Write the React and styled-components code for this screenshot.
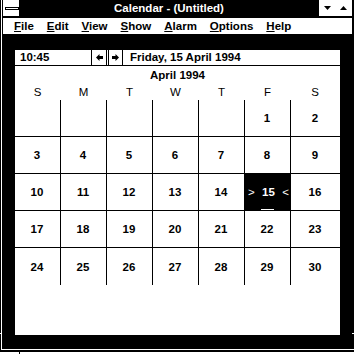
import React from "react";
import styled, { createGlobalStyle } from "styled-components";

const GlobalStyle = createGlobalStyle`
  * { box-sizing: border-box; }
  html, body { margin: 0; padding: 0; background: #fff; }
  body {
    font-family: "Liberation Sans", Arial, sans-serif;
    -webkit-font-smoothing: none;
  }
`;

const Desktop = styled.div`
  position: relative;
  width: 354px;
  height: 354px;
  background: #fff;
  padding-bottom: 2px;
  display: flex;
  overflow: hidden;

  /* resize-corner notches of the window frame */
  &::before {
    content: "";
    position: absolute;
    left: 19px;
    bottom: 0;
    width: 1px;
    height: 5px;
    background: #000;
  }
`;

const Frame = styled.div`
  position: relative;
  flex: 1;
  background: #000;
  padding-left: 1px;
  display: flex;

  &::before,
  &::after {
    content: "";
    position: absolute;
    top: 333px;
    width: 2px;
    height: 1px;
    background: #fff;
  }
  &::before { left: 0; }
  &::after { right: 0; }
`;

const Inner = styled.div`
  flex: 1;
  border-left: 1px solid #fff;
  border-bottom: 1px solid #fff;
  margin-bottom: 2px;
  padding: 0 2px 0 1px;
  display: flex;
  flex-direction: column;
`;

const TitleBar = styled.div`
  height: 18px;
  display: flex;
  align-items: flex-start;
  background: #000;
`;

const ControlBox = styled.div`
  width: 16px;
  height: 16px;
  background: #fff;
  display: flex;
  align-items: center;
  justify-content: center;
  padding-left: 1px;
`;

const ControlBar = styled.div`
  width: 14px;
  height: 3px;
  border: 1px solid #000;
  background: #fff;
`;

const TitleText = styled.div`
  flex: 1;
  height: 16px;
  line-height: 17px;
  text-align: center;
  color: #fff;
  font-weight: bold;
  font-size: 11.5px;
`;

const SizeButtons = styled.div`
  width: 33px;
  height: 16px;
  background: #fff;
  display: flex;
`;

const SizeButton = styled.div`
  flex: 1;
  display: flex;
  align-items: center;
  justify-content: center;
`;

const MenuBar = styled.div`
  height: 16px;
  background: #fff;
  display: flex;
  align-items: center;
  gap: 13px;
  padding-left: 11px;
  font-weight: bold;
  font-size: 11.5px;
  color: #000;

  u { text-underline-offset: 1px; }
`;

const Client = styled.div`
  flex: 1;
  background: #000;
  padding: 16px 12px 14px 12px;
  display: flex;
`;

const Panel = styled.div`
  flex: 1;
  background: #fff;
  display: flex;
  flex-direction: column;
  font-size: 11.5px;
  font-weight: bold;
  color: #000;
`;

const Toolbar = styled.div`
  height: 16px;
  border-bottom: 1px solid #000;
  display: flex;
  align-items: stretch;
`;

const TimeField = styled.div`
  width: 77px;
  border-right: 1px solid #000;
  padding-left: 5px;
  line-height: 15px;
`;

const ArrowButton = styled.div`
  width: ${({ $w }) => $w}px;
  border-right: 1px solid #000;
  border-left: ${({ $left }) => ($left ? "1px solid #000" : "none")};
  display: flex;
  align-items: center;
  justify-content: center;
`;

const Spacer = styled.div`
  width: 1px;
`;

const DateField = styled.div`
  flex: 1;
  padding-left: 7px;
  line-height: 15px;
`;

const MonthTitle = styled.div`
  height: 18px;
  line-height: 18px;
  text-align: center;
`;

const Columns = styled.div`
  display: grid;
  grid-template-columns: repeat(6, 46px) 1fr;
`;

const DayHeaders = styled(Columns)`
  height: 16px;
  line-height: 16px;
  font-weight: normal;
`;

const DayName = styled.div`
  text-align: center;
  padding-right: 1px;
`;

const Grid = styled(Columns)`
  grid-auto-rows: 37px;
`;

const Cell = styled.div`
  position: relative;
  display: flex;
  align-items: center;
  justify-content: ${({ $selected }) => ($selected ? "space-between" : "center")};
  padding: ${({ $selected }) => ($selected ? "0 1px 0 3px" : "0 1px 0 0")};
  border-right: ${({ $lastCol }) => ($lastCol ? "none" : "1px solid #000")};
  border-bottom: ${({ $lastRow }) => ($lastRow ? "none" : "1px solid #000")};
  background: ${({ $selected }) => ($selected ? "#000" : "#fff")};
  color: ${({ $selected }) => ($selected ? "#fff" : "#000")};

  ${({ $selected }) =>
    $selected &&
    `
    &::after {
      content: "";
      position: absolute;
      left: 16px;
      bottom: 0;
      width: 13px;
      height: 1px;
      background: #fff;
    }
  `}
`;

const Pointer = styled.span`
  font-weight: normal;
`;

const Rest = styled.div`
  flex: 1;
`;

const Arrow = ({ dir }) => (
  <svg width="7" height="7" viewBox="0 0 7 7">
    <polygon
      points="0,3.5 3.5,0 3.5,2 7,2 7,5 3.5,5 3.5,7"
      fill="#000"
      transform={dir === "right" ? "translate(7,0) scale(-1,1)" : undefined}
    />
  </svg>
);

const Tri = ({ up }) => (
  <svg width="7" height="4" viewBox="0 0 7 4">
    <polygon points={up ? "0,4 7,4 3.5,0" : "0,0 7,0 3.5,4"} fill="#000" />
  </svg>
);

const menu = [
  ["F", "ile"],
  ["E", "dit"],
  ["V", "iew"],
  ["S", "how"],
  ["A", "larm"],
  ["O", "ptions"],
  ["H", "elp"],
];

const dayNames = ["S", "M", "T", "W", "T", "F", "S"];

const weeks = [
  [null, null, null, null, null, 1, 2],
  [3, 4, 5, 6, 7, 8, 9],
  [10, 11, 12, 13, 14, 15, 16],
  [17, 18, 19, 20, 21, 22, 23],
  [24, 25, 26, 27, 28, 29, 30],
];

export default function App() {
  return (
    <Desktop>
      <GlobalStyle />
      <Frame>
        <Inner>
          <TitleBar>
            <ControlBox>
              <ControlBar />
            </ControlBox>
            <TitleText>Calendar - (Untitled)</TitleText>
            <SizeButtons>
              <SizeButton>
                <Tri />
              </SizeButton>
              <SizeButton>
                <Tri up />
              </SizeButton>
            </SizeButtons>
          </TitleBar>
          <MenuBar>
            {menu.map(([k, rest]) => (
              <span key={k}>
                <u>{k}</u>
                {rest}
              </span>
            ))}
          </MenuBar>
          <Client>
            <Panel>
              <Toolbar>
                <TimeField>10:45</TimeField>
                <ArrowButton $w={15}>
                  <Arrow dir="left" />
                </ArrowButton>
                <Spacer />
                <ArrowButton $w={15} $left>
                  <Arrow dir="right" />
                </ArrowButton>
                <DateField>Friday, 15 April 1994</DateField>
              </Toolbar>
              <MonthTitle>April 1994</MonthTitle>
              <DayHeaders>
                {dayNames.map((d, i) => (
                  <DayName key={i}>{d}</DayName>
                ))}
              </DayHeaders>
              <Grid>
                {weeks.map((week, r) =>
                  week.map((day, c) => {
                    const selected = day === 15;
                    return (
                      <Cell
                        key={`${r}-${c}`}
                        $lastCol={c === 6}
                        $lastRow={r === weeks.length - 1}
                        $selected={selected}
                      >
                        {selected ? (
                          <>
                            <Pointer>&gt;</Pointer>
                            <span>{day}</span>
                            <Pointer>&lt;</Pointer>
                          </>
                        ) : (
                          day
                        )}
                      </Cell>
                    );
                  })
                )}
              </Grid>
              <Rest />
            </Panel>
          </Client>
        </Inner>
      </Frame>
    </Desktop>
  );
}
